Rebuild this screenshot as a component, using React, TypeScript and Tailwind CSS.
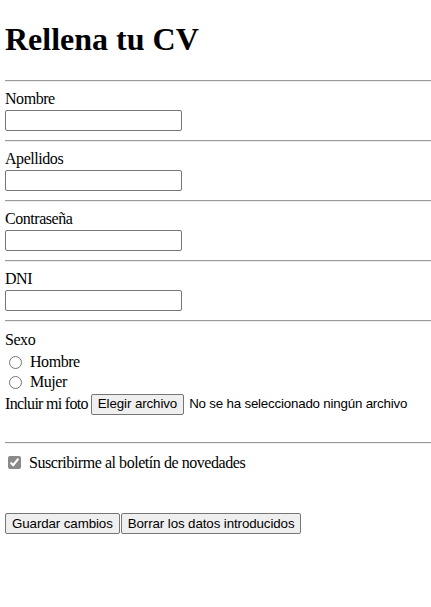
const SERIF = 'font-["Liberation_Serif",serif]'
const SANS = 'font-["Liberation_Sans",Arial,sans-serif]'

const TEXT_FIELDS = ['Nombre', 'Apellidos', 'Contraseña', 'DNI']

function Rule({ className = '' }: { className?: string }) {
  return <div className={`h-[2px] border-t border-t-[#9a9a9a] border-b border-b-[#eeeeee] ${className}`} />
}

function NativeButton({ children }: { children: React.ReactNode }) {
  return (
    <span
      className={`${SANS} inline-flex h-[21px] items-center rounded-[2px] border border-[#767676] bg-[#efefef] px-[6px] text-[13.33px] leading-none tracking-[-0.1px] text-black`}
    >
      {children}
    </span>
  )
}

export default function App() {
  return (
    <div className={`${SERIF} min-h-[607px] bg-white pl-[5px] text-[16px] leading-[18px] tracking-[-0.45px] text-black`}>
      {/* Title */}
      <h1 className="mt-[21px] h-[37px] text-[32px] font-bold leading-[37px] tracking-normal">Rellena tu CV</h1>

      <Rule className="mt-[22px]" />

      {/* Text inputs */}
      {TEXT_FIELDS.map((label) => (
        <div key={label}>
          <div className="mt-[8px] h-[18px]">{label}</div>
          <input
            type={label === 'Contraseña' ? 'password' : 'text'}
            className="mt-[2px] block h-[21px] w-[177px] rounded-[2px] border border-[#767676] bg-white"
          />
          <Rule className="mt-[9px]" />
        </div>
      ))}

      {/* Sexo */}
      <div className="mt-[9px] h-[18px]">Sexo</div>
      <div className="flex flex-col">
        {['Hombre', 'Mujer'].map((opt, i) => (
          <label key={opt} className={`flex h-[20px] items-center ${i === 0 ? 'mt-[3px]' : ''}`}>
            <input type="radio" name="sexo" className="ml-[4px] mr-[8px] size-[13px] accent-[#8a8a8a]" />
            <span>{opt}</span>
          </label>
        ))}
      </div>

      {/* Foto */}
      <div className="mt-[1px] flex h-[22px] items-center">
        <span className="mr-[3px] tracking-[-0.7px]">Incluir mi foto</span>
        <NativeButton>Elegir archivo</NativeButton>
        <span className={`${SANS} ml-[5px] text-[13.33px] tracking-[-0.2px]`}>No se ha seleccionado ningún archivo</span>
      </div>

      <Rule className="mt-[27px]" />

      {/* Boletín */}
      <label className="mt-[8px] flex h-[21px] items-center">
        <input type="checkbox" defaultChecked className="ml-[3px] mr-[8px] size-[13px] accent-[#8a8a8a]" />
        <span>Suscribirme al boletín de novedades</span>
      </label>

      {/* Acciones */}
      <div className="mt-[40px] flex gap-[1px]">
        <NativeButton>Guardar cambios</NativeButton>
        <NativeButton>Borrar los datos introducidos</NativeButton>
      </div>
    </div>
  )
}
